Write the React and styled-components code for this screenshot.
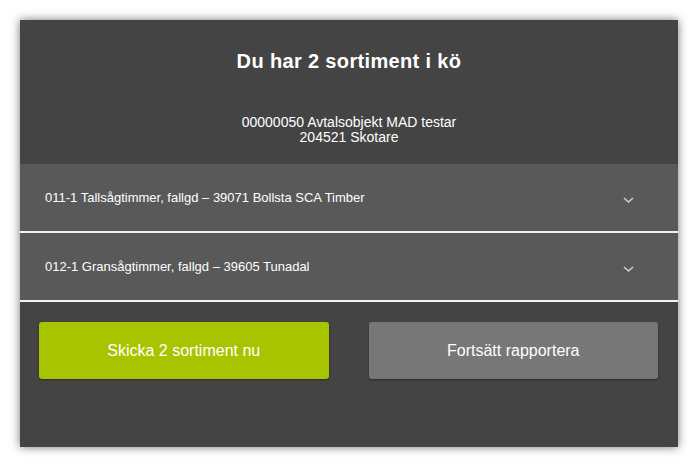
import React from 'react'
import styled, { createGlobalStyle } from 'styled-components'

const GlobalStyle = createGlobalStyle`
  html, body {
    margin: 0;
    padding: 0;
    background: #ffffff;
    font-family: "Liberation Sans", Arial, sans-serif;
  }
`

const Page = styled.div`
  padding: 20px 22px 21px 20px;
`

const Dialog = styled.div`
  width: 658px;
  height: 427px;
  background: #444444;
  box-shadow: 0 0 9px rgba(0, 0, 0, 0.55);
  color: #ffffff;
  display: flex;
  flex-direction: column;
`

const Header = styled.div`
  height: 144px;
  box-sizing: border-box;
  padding-top: 29px;
  text-align: center;
`

const Title = styled.h2`
  margin: 0;
  font-size: 20px;
  font-weight: bold;
  letter-spacing: 0.35px;
  line-height: 24px;
`

const Info = styled.div`
  margin-top: 42px;
  font-size: 14px;
  line-height: 15px;
`

const List = styled.ul`
  margin: 0;
  padding: 0;
  list-style: none;
`

const Row = styled.li`
  height: 67px;
  background: #595959;
  border-bottom: 2px solid #f2f2f2;
  display: flex;
  align-items: center;
  justify-content: space-between;
  padding: 0 44px 0 25px;
  font-size: 13px;
  color: #ffffff;
`

const RowText = styled.span`
  margin-top: 0;
`

const Chevron = styled.svg`
  width: 11px;
  height: 7px;
  margin-top: 6px;
`

const Actions = styled.div`
  display: flex;
  gap: 40px;
  padding: 20px 20px 0 19px;
`

const Button = styled.button`
  flex: 1;
  height: 57px;
  border: none;
  border-radius: 3px;
  background: ${p => (p.$primary ? '#a8c400' : '#777777')};
  color: #ffffff;
  font-family: "Liberation Sans", Arial, sans-serif;
  font-size: 16px;
  box-shadow: 0 1px 2px rgba(0, 0, 0, 0.35);
  cursor: pointer;
`

const rows = [
  '011-1 Tallsågtimmer, fallgd – 39071 Bollsta SCA Timber',
  '012-1 Gransågtimmer, fallgd – 39605 Tunadal',
]

const ChevronDown = () => (
  <Chevron viewBox="0 0 11 7">
    <polyline points="1,1 5.5,5 10,1" fill="none" stroke="#d0d0d0" strokeWidth="1.6" />
  </Chevron>
)

export default function App() {
  return (
    <Page>
      <GlobalStyle />
      <Dialog>
        <Header>
          <Title>Du har 2 sortiment i kö</Title>
          <Info>
            00000050 Avtalsobjekt MAD testar
            <br />
            204521 Skotare
          </Info>
        </Header>
        <List>
          {rows.map((r, i) => (
            <Row key={i}>
              <RowText>{r}</RowText>
              <ChevronDown />
            </Row>
          ))}
        </List>
        <Actions>
          <Button $primary>Skicka 2 sortiment nu</Button>
          <Button>Fortsätt rapportera</Button>
        </Actions>
      </Dialog>
    </Page>
  )
}
